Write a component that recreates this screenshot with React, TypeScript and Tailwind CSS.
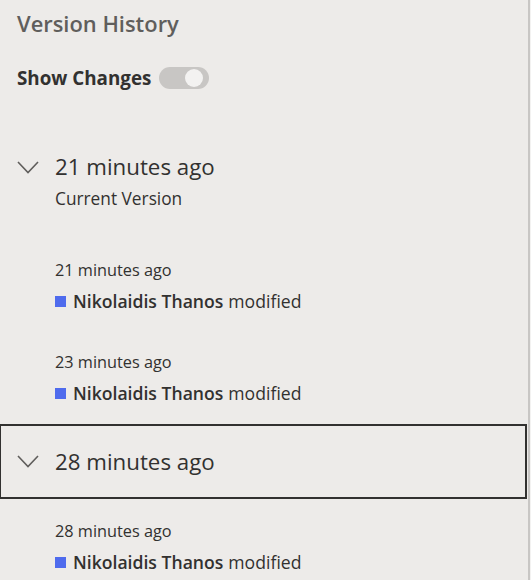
import React from "react";

const Chevron = () => (
  <svg width="22" height="13" viewBox="0 0 22 13" fill="none" className="shrink-0">
    <polyline points="1,1 11,11.5 21,1" stroke="#605e5c" strokeWidth="1.6" fill="none" />
  </svg>
);

const Item = ({ time, pt }: { time: string; pt: string }) => (
  <div className={pt}>
    <div className="h-[24px] flex items-center pl-[38px] text-[16.3px] text-[#323130]">{time}</div>
    <div className="mt-[7px] h-[24px] flex items-center pl-[38px] text-[17.6px] text-[#323130]">
      <span className="w-[11px] h-[11px] bg-[#4f6bed] mr-[7px] shrink-0" />
      <span className="font-semibold">Nikolaidis Thanos</span>
      <span className="ml-[5px]">modified</span>
    </div>
  </div>
);

export default function App() {
  return (
    <div
      className="flex w-[531px] h-[580px] overflow-hidden bg-[#edebe9]"
      style={{ fontFamily: '"Open Sans", "Noto Sans", sans-serif' }}
    >
      <div className="w-[527px] shrink-0 px-[17px]">
        <div className="h-[48px] flex items-center text-[21.9px] font-semibold text-[#605e5c]">
          Version History
        </div>
        <div className="h-[60px] flex items-center">
          <span className="text-[18.8px] font-bold text-[#323130]">Show Changes</span>
          <div className="ml-[8px] w-[50px] h-[22px] rounded-full bg-[#c8c6c4] flex items-center">
            <div className="ml-auto mr-[6px] w-[18px] h-[18px] rounded-full bg-[#f3f2f1]" />
          </div>
        </div>
        <div className="mt-[39px] h-[40px] flex items-center">
          <Chevron />
          <span className="ml-[16px] text-[22.3px] text-[#323130]">21 minutes ago</span>
        </div>
        <div className="h-[24px] flex items-center pl-[38px] text-[17.3px] text-[#323130]">
          Current Version
        </div>
        <Item time="21 minutes ago" pt="pt-[47px]" />
        <Item time="23 minutes ago" pt="pt-[37px]" />
        <div className="mt-[19px] -ml-[18px] -mr-[17px] h-[75px] border-2 border-[#323130] flex items-center pl-[16px]">
          <Chevron />
          <span className="ml-[16px] text-[22.3px] text-[#323130]">28 minutes ago</span>
        </div>
        <Item time="28 minutes ago" pt="pt-[20px]" />
      </div>
      <div className="w-[1px] shrink-0 bg-[#edebe9]" />
      <div className="w-[2px] shrink-0 bg-[#c8c6c4]" />
      <div className="flex-1 bg-[#f3f2f1]" />
    </div>
  );
}
